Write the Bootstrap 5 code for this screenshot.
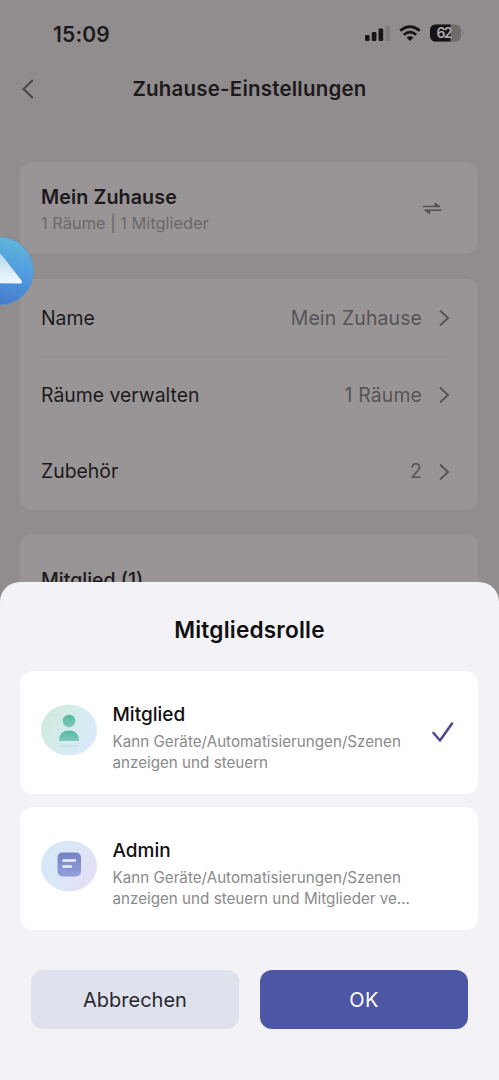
<!DOCTYPE html>
<html lang="de">
<head>
<meta charset="utf-8">
<meta name="viewport" content="width=device-width, initial-scale=1">
<title>Zuhause-Einstellungen</title>
<link href="https://cdn.jsdelivr.net/npm/bootstrap@5.3.0/dist/css/bootstrap.min.css" rel="stylesheet">
<style>
body{font-family:Inter,"Liberation Sans",sans-serif;background:#918d8e;color:#1d191b;height:1080px;overflow:hidden}
.phone{height:1080px;background:#918d8e}
.statusbar{height:68px;padding:0 35px 0 53px}
.clock{font-size:21px;font-weight:600;letter-spacing:.15px;padding-top:1px}
.topbar{height:42px}
.topbar h1{font-size:20.5px;font-weight:600;letter-spacing:.2px;padding-top:1px}
.backbtn{left:20px;top:9px;line-height:0}
.pane{background:#999596;border-radius:12px;margin:0 21px 0 20px;padding:0 28px 0 21px}
.home{margin-top:52px;height:91px;padding-top:5px}
.settings{margin-top:26px;height:231px}
.members{margin-top:24px;height:120px;padding-top:34px}
.t-title{font-size:19.5px;font-weight:500;line-height:24px}
.home .t-title{font-size:19.7px;font-weight:600;letter-spacing:.1px}
.t-sub{font-size:16.4px;line-height:26px;padding-top:1px;color:#6c6869}
.setrow{height:76.6px;font-size:19.4px;padding-top:2px}
.setrow + .setrow{border-top:1px solid transparent}
.setrow.ruled{border-top-color:#939091}
.val{color:#575355;gap:16px}
.val > span{letter-spacing:.15px}
.orb{left:-34px;top:236px;width:68px;height:70px}
.sheet{height:498px;background:#f3f3f7;border-radius:20px 20px 0 0;color:#101012}
.sheet h2{font-size:22.6px;font-weight:600;line-height:28px;letter-spacing:.2px;margin:34px 0 27px}
.role{background:#fff;border-radius:13px;margin:0 21px 0 20px;height:123px;padding:0 24px 0 21px}
.role + .role{margin-top:13px}
.role-icon{width:56px;height:52px;margin-top:-6px}
.role-text{margin-left:15.5px;padding-top:11px}
.role h3{font-size:19px;font-weight:500;line-height:24px;margin-bottom:4px}
.role p{font-size:15.2px;line-height:21px;color:#8a8a8c;white-space:nowrap}
.role + .role .role-text{padding-top:10px}
.actions{margin:40px 31px 0;gap:21px}
.actions .btn{height:59px;border-radius:12px;font-size:20px;border:0}
.btn-cancel,.btn-cancel:hover{background:#dfe2ed;color:#29272e}
.btn-ok,.btn-ok:hover{background:#4c56a4;color:#fff}
.btn-ok{letter-spacing:.4px}
</style>
</head>
<body>
<div class="phone position-relative overflow-hidden">
  <div class="statusbar d-flex align-items-center justify-content-between">
    <span class="clock">15:09</span>
    <div class="d-flex align-items-center">
      <svg width="100" height="24" viewBox="0 0 100 24">
        <g fill="#171315"><rect x="1" y="13" width="4.600" height="6" rx="1.300"/><rect x="7.800" y="10" width="4.600" height="9" rx="1.300"/><rect x="14.600" y="6.500" width="4.600" height="12.500" rx="1.300"/></g>
        <rect x="21.500" y="3.500" width="4.200" height="15.500" rx="1.300" fill="#7f7b7c"/>
        <g fill="none" stroke="#171315" stroke-width="2.700"><path d="M36.200 8.600Q46 .6 55.800 8.600"/><path d="M39.800 12.800Q46 7.600 52.200 12.800"/></g>
        <path d="M42.500 15.600Q46 12.800 49.500 15.600L46 19Z" fill="#171315"/>
        <rect x="66" y="2.500" width="31" height="17" rx="5.500" fill="#6f6b6c"/>
        <path d="M71.500 2.500H86.500V19.500H71.500A5.500 5.500 0 0 1 66 14V8A5.500 5.500 0 0 1 71.500 2.500Z" fill="#171315"/>
        <path d="M98.300 8Q101 10.900 98.300 13.800Z" fill="#7d797a"/>
        <text x="72.500" y="16" font-size="14" font-weight="600" fill="#b3afb0" textLength="16">62</text>
      </svg>
    </div>
  </div>
  <header class="topbar position-relative d-flex align-items-center justify-content-center">
    <a class="backbtn position-absolute" href="#" aria-label="Zurück"><svg width="16" height="24" viewBox="0 0 16 24" fill="none" stroke="#494547" stroke-width="2.100"><path d="M12.800 3 3.500 12l9.300 9"/></svg></a>
    <h1 class="m-0">Zuhause-Einstellungen</h1>
  </header>

  <section class="pane home d-flex align-items-center justify-content-between">
    <div>
      <div class="t-title">Mein Zuhause</div>
      <div class="t-sub">1 Räume | 1 Mitglieder</div>
    </div>
    <svg class="me-2 mb-1" width="19" height="16" viewBox="0 0 19 16" fill="none" stroke="#555153" stroke-width="1.500"><path d="M0 6.500H17"/><path d="M1.500 10.200H18.500"/><path d="M11.500 2.200 17.500 6.500H11.500ZM7 14.500 1 10.200H7Z" fill="#555153" stroke="none"/></svg>
  </section>

  <section class="pane settings">
    <div class="setrow d-flex align-items-center justify-content-between"><span>Name</span><span class="val d-flex align-items-center"><span>Mein Zuhause</span><svg width="12" height="20" viewBox="0 0 12 20" fill="none" stroke="#575355" stroke-width="1.900"><path d="m2 2.500 8 7.500-8 7.500"/></svg></span></div>
    <div class="setrow ruled d-flex align-items-center justify-content-between"><span>Räume verwalten</span><span class="val d-flex align-items-center"><span>1 Räume</span><svg width="12" height="20" viewBox="0 0 12 20" fill="none" stroke="#575355" stroke-width="1.900"><path d="m2 2.500 8 7.500-8 7.500"/></svg></span></div>
    <div class="setrow d-flex align-items-center justify-content-between"><span>Zubehör</span><span class="val d-flex align-items-center"><span>2</span><svg width="12" height="20" viewBox="0 0 12 20" fill="none" stroke="#575355" stroke-width="1.900"><path d="m2 2.500 8 7.500-8 7.500"/></svg></span></div>
  </section>

  <section class="pane members"><div class="t-title">Mitglied (1)</div></section>

  <svg class="orb position-absolute" viewBox="0 0 68 70">
    <defs>
      <linearGradient id="orbFill" x1=".8" y1="0" x2=".55" y2="1"><stop offset="0" stop-color="#63b8d8"/><stop offset=".45" stop-color="#529fe0"/><stop offset="1" stop-color="#477bcc"/></linearGradient>
      <linearGradient id="peak" x1="0" y1="0" x2="0" y2="1"><stop offset="0" stop-color="#b5dcf1"/><stop offset="1" stop-color="#f2f8fc"/></linearGradient>
    </defs>
    <ellipse cx="34" cy="35" rx="33.500" ry="34" fill="url(#orbFill)" stroke="#6696bd" stroke-width="1"/>
    <path d="M33 17Q35 18 38 22L55.500 44.500Q57 47.500 54 47.500L18 47Z" fill="url(#peak)"/>
  </svg>

  <div class="sheet position-absolute bottom-0 start-0 end-0 d-flex flex-column" role="dialog">
    <h2 class="text-center">Mitgliedsrolle</h2>
    <div class="role d-flex align-items-center">
      <svg class="role-icon flex-shrink-0" viewBox="0 0 56 52">
        <defs>
          <linearGradient id="mBg" x1="0" y1=".3" x2="1" y2=".7"><stop offset="0" stop-color="#cfeadd"/><stop offset=".55" stop-color="#d5ecef"/><stop offset="1" stop-color="#dce8fa"/></linearGradient>
          <linearGradient id="mFg" x1="0" y1="0" x2="0" y2="1"><stop offset="0" stop-color="#55b7a0"/><stop offset="1" stop-color="#7dcabb"/></linearGradient>
        </defs>
        <ellipse cx="28" cy="26" rx="28" ry="25.500" fill="url(#mBg)"/>
        <ellipse cx="28" cy="17" rx="6.300" ry="6.200" fill="url(#mFg)"/>
        <path d="M18 36Q18.500 26.500 28 26.500T38 36Q38 37 36.500 37H19.500Q18 37 18 36Z" fill="url(#mFg)"/>
        <path d="M20 42H36" stroke="#c6e3ea" stroke-width="2" stroke-linecap="round"/>
      </svg>
      <div class="role-text flex-grow-1"><h3>Mitglied</h3><p class="m-0">Kann Geräte/Automatisierungen/Szenen<br>anzeigen und steuern</p></div>
      <svg class="flex-shrink-0" width="22" height="22" viewBox="0 0 22 22" fill="none" stroke="#514b95" stroke-width="2.600" stroke-linecap="round" stroke-linejoin="round"><path d="m1.500 11 6.500 7.500L20 1.500"/></svg>
    </div>
    <div class="role d-flex align-items-center">
      <svg class="role-icon flex-shrink-0" viewBox="0 0 56 52">
        <defs>
          <linearGradient id="aBg" x1="0" y1=".3" x2="1" y2=".8"><stop offset="0" stop-color="#d5e9f8"/><stop offset=".6" stop-color="#dde5f6"/><stop offset="1" stop-color="#e5dcf6"/></linearGradient>
          <linearGradient id="aFg" x1="0" y1="0" x2="0" y2="1"><stop offset="0" stop-color="#7583c2"/><stop offset="1" stop-color="#939fdc"/></linearGradient>
        </defs>
        <ellipse cx="28" cy="26" rx="28" ry="25.500" fill="url(#aBg)"/>
        <rect x="16.500" y="12.500" width="23.500" height="24" rx="5" fill="url(#aFg)"/>
        <path d="M22.500 20.500H34M22.500 26.500H30" stroke="#edf0fc" stroke-width="2.400" stroke-linecap="round"/>
      </svg>
      <div class="role-text flex-grow-1"><h3>Admin</h3><p class="m-0">Kann Geräte/Automatisierungen/Szenen<br>anzeigen und steuern und Mitglieder ve…</p></div>
    </div>
    <div class="actions d-flex">
      <button class="btn btn-cancel flex-fill w-50">Abbrechen</button>
      <button class="btn btn-ok flex-fill w-50">OK</button>
    </div>
  </div>
</div>
<script src="https://cdn.jsdelivr.net/npm/bootstrap@5.3.0/dist/js/bootstrap.bundle.min.js"></script>
</body>
</html>
